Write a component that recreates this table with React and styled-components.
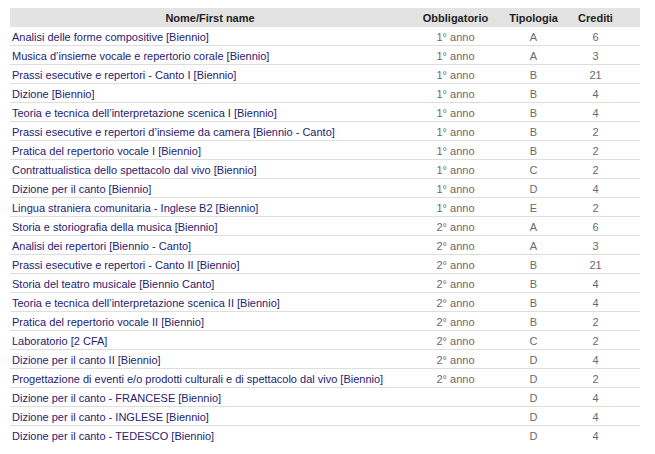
import React from 'react';
import styled, { createGlobalStyle } from 'styled-components';

const GlobalStyle = createGlobalStyle`
	body {
		margin: 0;
		background: #ffffff;
		font-family: 'Liberation Sans', Arial, sans-serif;
	}
`;

const Page = styled.div`
	padding: 8px 10px;
`;

const Table = styled.table`
	width: 630px;
	table-layout: fixed;
	border-collapse: collapse;
	font-size: 11px;
`;

const HeadCell = styled.th`
	height: 19px;
	padding: 0 ${(p) => (p.$last ? '15px' : '0')} 0 0;
	background: #e3e3e3;
	color: #222222;
	font-weight: bold;
	text-align: center;
	vertical-align: middle;
`;

const Row = styled.tr`
	border-bottom: 1px solid #dedede;

	&:last-child {
		border-bottom: none;
	}
`;

const NameCell = styled.td`
	height: 17px;
	padding: 1px 0 0 2px;
	color: #1f2270;
	white-space: nowrap;
	vertical-align: middle;
`;

const Cell = styled.td`
	height: 17px;
	padding: 1px ${(p) => (p.$last ? '15px' : '0')} 0 0;
	color: #6a6a6a;
	text-align: center;
	vertical-align: middle;
`;

const courses = [
	['Analisi delle forme compositive [Biennio]', '1° anno', 'A', '6'],
	['Musica d’insieme vocale e repertorio corale [Biennio]', '1° anno', 'A', '3'],
	['Prassi esecutive e repertori - Canto I [Biennio]', '1° anno', 'B', '21'],
	['Dizione [Biennio]', '1° anno', 'B', '4'],
	['Teoria e tecnica dell’interpretazione scenica I [Biennio]', '1° anno', 'B', '4'],
	['Prassi esecutive e repertori d’insieme da camera [Biennio - Canto]', '1° anno', 'B', '2'],
	['Pratica del repertorio vocale I [Biennio]', '1° anno', 'B', '2'],
	['Contrattualistica dello spettacolo dal vivo [Biennio]', '1° anno', 'C', '2'],
	['Dizione per il canto [Biennio]', '1° anno', 'D', '4'],
	['Lingua straniera comunitaria - Inglese B2 [Biennio]', '1° anno', 'E', '2'],
	['Storia e storiografia della musica [Biennio]', '2° anno', 'A', '6'],
	['Analisi dei repertori [Biennio - Canto]', '2° anno', 'A', '3'],
	['Prassi esecutive e repertori - Canto II [Biennio]', '2° anno', 'B', '21'],
	['Storia del teatro musicale [Biennio Canto]', '2° anno', 'B', '4'],
	['Teoria e tecnica dell’interpretazione scenica II [Biennio]', '2° anno', 'B', '4'],
	['Pratica del repertorio vocale II [Biennio]', '2° anno', 'B', '2'],
	['Laboratorio [2 CFA]', '2° anno', 'C', '2'],
	['Dizione per il canto II [Biennio]', '2° anno', 'D', '4'],
	['Progettazione di eventi e/o prodotti culturali e di spettacolo dal vivo [Biennio]', '2° anno', 'D', '2'],
	['Dizione per il canto - FRANCESE [Biennio]', '', 'D', '4'],
	['Dizione per il canto - INGLESE [Biennio]', '', 'D', '4'],
	['Dizione per il canto - TEDESCO [Biennio]', '', 'D', '4'],
];

const App = () => {
	return (
		<Page>
			<GlobalStyle />
			<Table>
				<colgroup>
					<col style={{ width: 400 }} />
					<col style={{ width: 91 }} />
					<col style={{ width: 65 }} />
					<col style={{ width: 74 }} />
				</colgroup>
				<thead>
					<tr>
						<HeadCell>Nome/First name</HeadCell>
						<HeadCell>Obbligatorio</HeadCell>
						<HeadCell>Tipologia</HeadCell>
						<HeadCell $last>Crediti</HeadCell>
					</tr>
				</thead>
				<tbody>
					{courses.map(([name, year, type, credits]) => (
						<Row key={name}>
							<NameCell>{name}</NameCell>
							<Cell>{year}</Cell>
							<Cell>{type}</Cell>
							<Cell $last>{credits}</Cell>
						</Row>
					))}
				</tbody>
			</Table>
		</Page>
	);
};

export default App;
